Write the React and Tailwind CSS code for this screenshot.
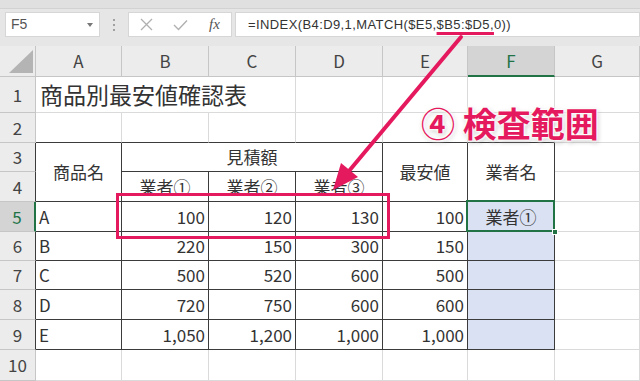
import React from "react";

// border presets for sheet cells
const GRID = "border-r-[#dadada] border-b-[#dadada]";
const GRID_TOP = "border-r-[#dadada] border-b-[#3b3b3b]";
const BOX = "border-r-[#3b3b3b] border-b-[#3b3b3b]";

function Cell({ className = "", children }) {
  return (
    <div className={"flex items-center px-[3px] whitespace-nowrap border-r border-b text-[17px] " + className}>
      {children}
    </div>
  );
}

function ColHead({ label, active }) {
  if (active) {
    return (
      <div className="flex items-center justify-center bg-[#d4d4d4] border-r border-r-[#c6c6c6] border-b-2 border-b-[#217346] text-[17px] text-[#217346]">
        {label}
      </div>
    );
  }
  return (
    <div className="flex items-center justify-center bg-[#ececec] border-r border-b border-r-[#c6c6c6] border-b-[#c6c6c6] text-[17px] text-[#444]">
      {label}
    </div>
  );
}

function RowHead({ n, edge, active }) {
  if (active) {
    return (
      <div className="flex items-center justify-center bg-[#d4d4d4] border-r-2 border-b border-r-[#217346] border-b-[#c6c6c6] text-[17px] text-[#217346]">
        {n}
      </div>
    );
  }
  return (
    <div
      className={
        edge
          ? "flex items-center justify-center bg-[#ececec] border-r border-b border-r-[#3b3b3b] border-b-[#c6c6c6] text-[17px] text-[#444]"
          : "flex items-center justify-center bg-[#ececec] border-r border-b border-r-[#c6c6c6] border-b-[#c6c6c6] text-[17px] text-[#444]"
      }
    >
      {n}
    </div>
  );
}

const dataRows = [
  { n: 6, item: "B", nums: ["220", "150", "300", "150"] },
  { n: 7, item: "C", nums: ["500", "520", "600", "500"] },
  { n: 8, item: "D", nums: ["720", "750", "600", "600"] },
  { n: 9, item: "E", nums: ["1,050", "1,200", "1,000", "1,000"] },
];

export default function App() {
  return (
    <div className="relative w-[640px] h-[381px] overflow-hidden bg-white font-['Noto_Sans_CJK_JP',sans-serif] text-[#333]">

      {/* ================= FORMULA BAR ================= */}
      <div className="h-[46px] bg-[#e6e6e6]">
        <div className="h-[9px] bg-[#e0e0e0] border-b border-[#d2d2d2]" />
        <div className="flex items-center mt-[3px] h-[25px]">
          {/* name box */}
          <div className="ml-[5px] w-[95px] h-[25px] bg-white border border-[#d6d6d6] flex items-center justify-between pl-[5px] pr-[6px]">
            <span className="text-[14px] text-[#555] font-['Liberation_Sans',sans-serif]">F5</span>
            <span className="w-0 h-0 border-l-[3px] border-r-[3px] border-t-[4px] border-l-transparent border-r-transparent border-t-[#777]" />
          </div>
          {/* dots */}
          <div className="w-[28px] flex flex-col items-center gap-[3px]">
            <span className="w-[2px] h-[2px] bg-[#a0a0a0]" />
            <span className="w-[2px] h-[2px] bg-[#a0a0a0]" />
            <span className="w-[2px] h-[2px] bg-[#a0a0a0]" />
          </div>
          {/* cancel / enter / fx */}
          <div className="w-[104px] h-[25px] bg-white border border-[#d6d6d6] flex items-center pl-[11px]">
            <svg width="13" height="13" viewBox="0 0 13 13">
              <path d="M1 1 L12 12 M12 1 L1 12" stroke="#b0b0b0" strokeWidth="1.3" fill="none" />
            </svg>
            <svg className="ml-[20px]" width="15" height="12" viewBox="0 0 15 12">
              <path d="M1 6 L5.5 10.5 L14 1.5" stroke="#b0b0b0" strokeWidth="1.4" fill="none" />
            </svg>
            <span className="ml-[21px] text-[15px] italic text-[#555] font-['Liberation_Serif',serif]">fx</span>
          </div>
          {/* formula */}
          <div className="ml-[3px] flex-1 h-[25px] bg-white border border-[#d6d6d6] flex items-center pl-[12px] text-[13px] tracking-[0.4px] text-[#333] font-['Liberation_Sans',sans-serif]">
            =INDEX(B4:D9,1,MATCH($E5,
            <span className="underline decoration-[#e5195e] decoration-[3px] underline-offset-[3px]">$B5:$D5,</span>
            0))
          </div>
        </div>
      </div>

      {/* ================= SHEET ================= */}
      <div className="grid grid-cols-[36px_86px_87px_87px_87px_85px_87px_85px] grid-rows-[31px_36px_30px_29px_30px_30px_29px_29px_30px_30px_31px]">

        {/* column headers */}
        <div className="relative bg-[#ececec] border-r border-b border-r-[#c6c6c6] border-b-[#c6c6c6]">
          <svg className="absolute left-0 top-0" width="36" height="31" viewBox="0 0 36 31">
            <polygon points="33,4 33,27 9,27" fill="#b4b4b4" />
          </svg>
        </div>
        <ColHead label="A" />
        <ColHead label="B" />
        <ColHead label="C" />
        <ColHead label="D" />
        <ColHead label="E" />
        <ColHead label="F" active />
        <ColHead label="G" />

        {/* row 1 */}
        <RowHead n="1" />
        <Cell className={"col-span-3 text-[23px] pl-[4px] " + GRID}>商品別最安値確認表</Cell>
        <Cell className={GRID} />
        <Cell className={GRID} />
        <Cell className={GRID} />
        <Cell className={GRID} />

        {/* row 2 */}
        <RowHead n="2" />
        <Cell className={GRID_TOP} />
        <Cell className={GRID_TOP} />
        <Cell className={GRID_TOP} />
        <Cell className={GRID_TOP} />
        <Cell className={GRID_TOP} />
        <Cell className={GRID_TOP} />
        <Cell className={GRID} />

        {/* row 3 */}
        <RowHead n="3" edge />
        <Cell className={"row-span-2 justify-center " + BOX}>商品名</Cell>
        <Cell className={"col-span-3 justify-center " + BOX}>見積額</Cell>
        <Cell className={"row-span-2 justify-center " + BOX}>最安値</Cell>
        <Cell className={"row-span-2 justify-center " + BOX}>業者名</Cell>
        <Cell className={GRID} />

        {/* row 4 */}
        <RowHead n="4" edge />
        <Cell className={"justify-center " + BOX}>業者①</Cell>
        <Cell className={"justify-center " + BOX}>業者②</Cell>
        <Cell className={"justify-center " + BOX}>業者③</Cell>
        <Cell className={GRID} />

        {/* row 5 (selected) */}
        <RowHead n="5" active />
        <Cell className={BOX}>A</Cell>
        <Cell className={"justify-end " + BOX}>100</Cell>
        <Cell className={"justify-end " + BOX}>120</Cell>
        <Cell className={"justify-end " + BOX}>130</Cell>
        <Cell className={"justify-end " + BOX}>100</Cell>
        <Cell className={"relative justify-center bg-[#d9e1f2] " + BOX}>
          業者①
          <div className="absolute z-10 -left-[2px] -top-[2px] -right-[1px] -bottom-[1px] border-2 border-[#217346]" />
          <div className="absolute z-10 -right-[4px] -bottom-[4px] w-[6px] h-[6px] bg-[#217346] border border-white" />
        </Cell>
        <Cell className={GRID} />

        {/* rows 6-9 */}
        {dataRows.map((r) => (
          <React.Fragment key={r.n}>
            <RowHead n={r.n} edge />
            <Cell className={BOX}>{r.item}</Cell>
            {r.nums.map((v, i) => (
              <Cell key={i} className={"justify-end " + BOX}>{v}</Cell>
            ))}
            <Cell className={"bg-[#d9e1f2] " + BOX} />
            <Cell className={GRID} />
          </React.Fragment>
        ))}

        {/* row 10 */}
        <RowHead n="10" />
        <Cell className={GRID} />
        <Cell className={GRID} />
        <Cell className={GRID} />
        <Cell className={GRID} />
        <Cell className={GRID} />
        <Cell className={GRID} />
        <Cell className={GRID} />
      </div>

      {/* ================= ANNOTATIONS ================= */}
      <svg className="absolute left-0 top-0 pointer-events-none" width="640" height="381" viewBox="0 0 640 381">
        <rect x="117.5" y="194.5" width="271" height="43" fill="none" stroke="#e5195e" strokeWidth="3" />
        <line x1="461" y1="37" x2="349" y2="171" stroke="#e5195e" strokeWidth="4" strokeLinecap="round" />
        <polygon points="333,190 358,177 341,163" fill="#e5195e" />
      </svg>

      <div className="absolute left-[421px] top-[106px] text-[34px] font-bold leading-none whitespace-nowrap text-[#e5195e] [text-shadow:0_0_2px_#fff,0_0_3px_#fff,0_0_3px_#fff,0_0_4px_#fff,1px_2px_5px_rgba(0,0,0,0.3)]">
        ④ 検査範囲
      </div>
    </div>
  );
}
